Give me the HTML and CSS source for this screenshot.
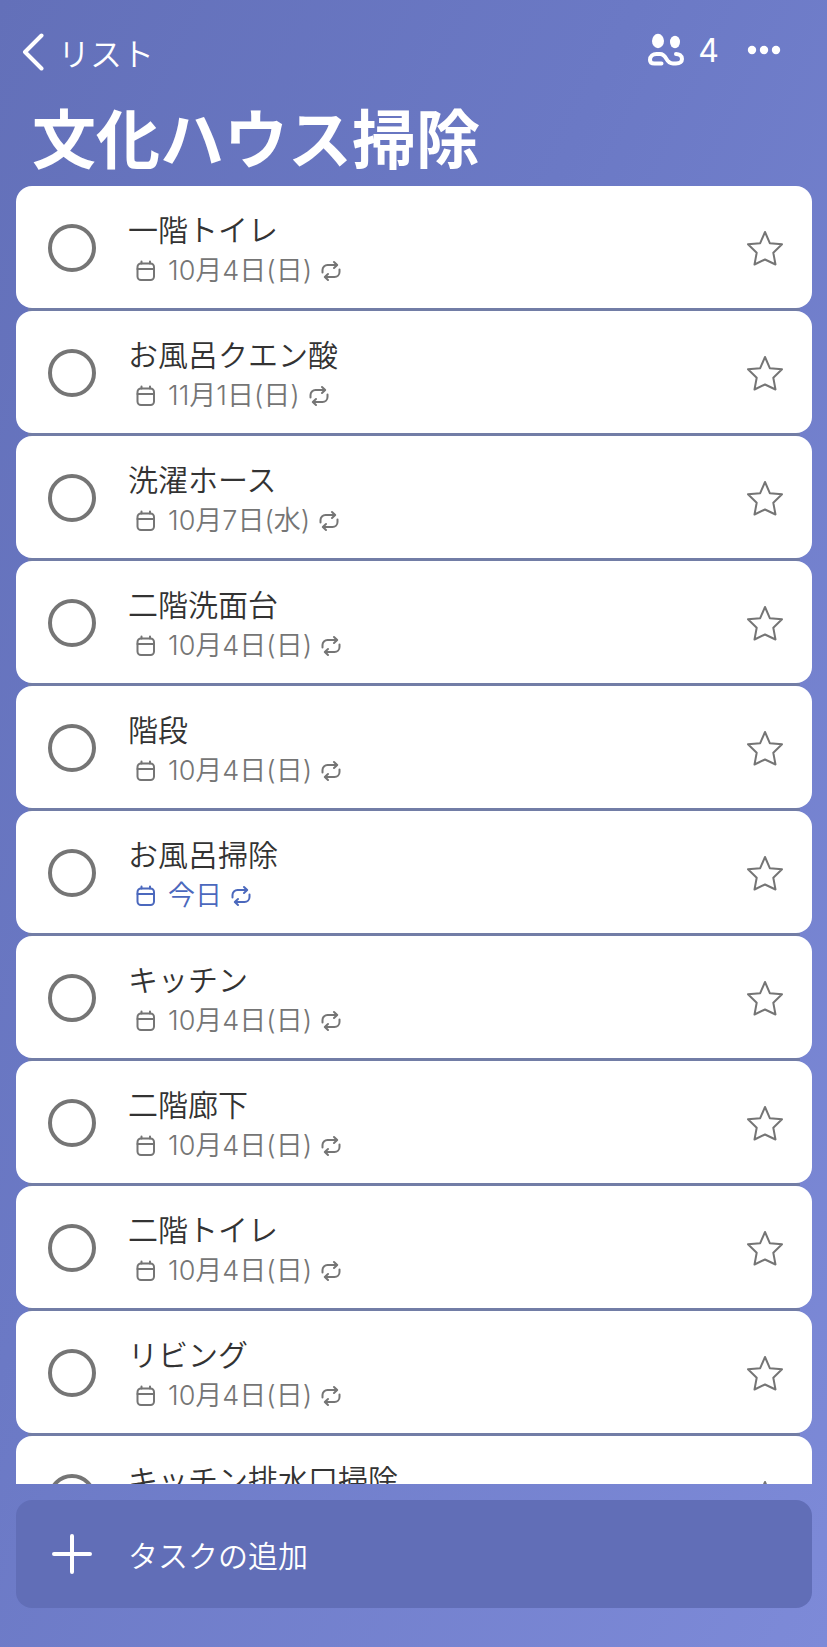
FILE: index.html
```html
<!DOCTYPE html>
<html lang="ja">
<head>
  <meta charset="UTF-8">
  <meta name="viewport" content="width=device-width, initial-scale=1">
  <title>文化ハウス掃除</title>
  <link rel="stylesheet" href="styles.css">
</head>
<body>

  <!-- shared icons -->
  <svg class="icon-defs" aria-hidden="true">
    <symbol id="icon-calendar" viewBox="0 0 20 22">
      <rect x="1.5" y="3.500" width="16.500" height="16.500" rx="3.500"/>
      <path d="M1.5 9h16.500M5.500 1.500v2M14 1.500v2"/>
    </symbol>
    <symbol id="icon-repeat" viewBox="0 0 20 22">
      <path d="M1.500 12.500V10a5 5 0 0 1 5-5H16M13 2l3.200 3L13 8"/>
      <path d="M18.500 9.500V12a5 5 0 0 1-5 5H4M7 14l-3.200 3L7 20"/>
    </symbol>
    <symbol id="icon-star" viewBox="0 0 38 38">
      <path d="M19 3l4.800 11.200L36 15.300l-8.700 8.400L29.500 35.500 19 30.500 8.500 35.500l2.200-11.800L2 15.300l12.200-1.100z"/>
    </symbol>
  </svg>

  <header class="top-bar">
    <button type="button" class="back-btn">
      <svg class="back-icon" viewBox="0 0 22 38"><path d="M19.500 2.500L3 19l16.500 16.500"/></svg>
      リスト
    </button>
    <div class="top-actions">
      <button type="button" class="members-btn" aria-label="メンバー 4">
        <svg class="members-icon" viewBox="0 0 36 34">
          <ellipse cx="10" cy="8" rx="6" ry="7.200"/>
          <ellipse cx="27" cy="9" rx="5" ry="6.200"/>
          <path d="M13.500 30.500H6.500C2.500 30.500 2 28.500 2 27C2 23 5 21 8.500 21H12C19.500 21 17 30.500 25 30.500H28C32 30.500 34 28.500 34 26C34 22.500 31 21 28 21"/>
        </svg>
        4
      </button>
      <button type="button" class="more-btn" aria-label="その他">
        <svg class="more-icon" viewBox="0 0 34 10">
          <circle cx="5" cy="5" r="4.200"/>
          <circle cx="17" cy="5" r="4.200"/>
          <circle cx="29" cy="5" r="4.200"/>
        </svg>
      </button>
    </div>
  </header>

  <h1>文化ハウス掃除</h1>

  <ul class="task-list">
    <li class="task">
      <input type="checkbox" id="task1">
      <div class="task-text">
        <label for="task1">一階トイレ</label>
        <p class="due"><svg><use href="#icon-calendar"/></svg><span>10月4日(日)</span><svg><use href="#icon-repeat"/></svg></p>
      </div>
      <button type="button" class="star-btn" aria-label="重要"><svg><use href="#icon-star"/></svg></button>
    </li>
    <li class="task">
      <input type="checkbox" id="task2">
      <div class="task-text">
        <label for="task2">お風呂クエン酸</label>
        <p class="due"><svg><use href="#icon-calendar"/></svg><span>11月1日(日)</span><svg><use href="#icon-repeat"/></svg></p>
      </div>
      <button type="button" class="star-btn" aria-label="重要"><svg><use href="#icon-star"/></svg></button>
    </li>
    <li class="task">
      <input type="checkbox" id="task3">
      <div class="task-text">
        <label for="task3">洗濯ホース</label>
        <p class="due"><svg><use href="#icon-calendar"/></svg><span>10月7日(水)</span><svg><use href="#icon-repeat"/></svg></p>
      </div>
      <button type="button" class="star-btn" aria-label="重要"><svg><use href="#icon-star"/></svg></button>
    </li>
    <li class="task">
      <input type="checkbox" id="task4">
      <div class="task-text">
        <label for="task4">二階洗面台</label>
        <p class="due"><svg><use href="#icon-calendar"/></svg><span>10月4日(日)</span><svg><use href="#icon-repeat"/></svg></p>
      </div>
      <button type="button" class="star-btn" aria-label="重要"><svg><use href="#icon-star"/></svg></button>
    </li>
    <li class="task">
      <input type="checkbox" id="task5">
      <div class="task-text">
        <label for="task5">階段</label>
        <p class="due"><svg><use href="#icon-calendar"/></svg><span>10月4日(日)</span><svg><use href="#icon-repeat"/></svg></p>
      </div>
      <button type="button" class="star-btn" aria-label="重要"><svg><use href="#icon-star"/></svg></button>
    </li>
    <li class="task">
      <input type="checkbox" id="task6">
      <div class="task-text">
        <label for="task6">お風呂掃除</label>
        <p class="due today"><svg><use href="#icon-calendar"/></svg><span>今日</span><svg><use href="#icon-repeat"/></svg></p>
      </div>
      <button type="button" class="star-btn" aria-label="重要"><svg><use href="#icon-star"/></svg></button>
    </li>
    <li class="task">
      <input type="checkbox" id="task7">
      <div class="task-text">
        <label for="task7">キッチン</label>
        <p class="due"><svg><use href="#icon-calendar"/></svg><span>10月4日(日)</span><svg><use href="#icon-repeat"/></svg></p>
      </div>
      <button type="button" class="star-btn" aria-label="重要"><svg><use href="#icon-star"/></svg></button>
    </li>
    <li class="task">
      <input type="checkbox" id="task8">
      <div class="task-text">
        <label for="task8">二階廊下</label>
        <p class="due"><svg><use href="#icon-calendar"/></svg><span>10月4日(日)</span><svg><use href="#icon-repeat"/></svg></p>
      </div>
      <button type="button" class="star-btn" aria-label="重要"><svg><use href="#icon-star"/></svg></button>
    </li>
    <li class="task">
      <input type="checkbox" id="task9">
      <div class="task-text">
        <label for="task9">二階トイレ</label>
        <p class="due"><svg><use href="#icon-calendar"/></svg><span>10月4日(日)</span><svg><use href="#icon-repeat"/></svg></p>
      </div>
      <button type="button" class="star-btn" aria-label="重要"><svg><use href="#icon-star"/></svg></button>
    </li>
    <li class="task">
      <input type="checkbox" id="task10">
      <div class="task-text">
        <label for="task10">リビング</label>
        <p class="due"><svg><use href="#icon-calendar"/></svg><span>10月4日(日)</span><svg><use href="#icon-repeat"/></svg></p>
      </div>
      <button type="button" class="star-btn" aria-label="重要"><svg><use href="#icon-star"/></svg></button>
    </li>
    <li class="task">
      <input type="checkbox" id="task11">
      <div class="task-text">
        <label for="task11">キッチン排水口掃除</label>
        <p class="due"><svg><use href="#icon-calendar"/></svg><span>10月4日(日)</span><svg><use href="#icon-repeat"/></svg></p>
      </div>
      <button type="button" class="star-btn" aria-label="重要"><svg><use href="#icon-star"/></svg></button>
    </li>
  </ul>

  <button type="button" class="add-btn">
    <svg class="plus-icon" viewBox="0 0 40 40"><path d="M20 2v36M2 20h36"/></svg>
    タスクの追加
  </button>

</body>
</html>
```

FILE: styles.css
```css
* {
  box-sizing: border-box;
}

body {
  margin: 0;
  height: 100vh;
  padding: 24px 15px 39px 16px;
  display: flex;
  flex-direction: column;
  font-family: Inter, "Noto Sans CJK JP", sans-serif;
  font-size: 30px;
  font-weight: 350;
  color: #333;
  background: linear-gradient(115deg, #6370b9 0%, #6b79c5 40%, #7d8ad8 100%);
}

button {
  border: none;
  padding: 0;
  background: none;
  font: inherit;
  color: white;
  cursor: pointer;
}

svg {
  display: block;
  fill: none;
  stroke: currentColor;
  stroke-linecap: round;
  stroke-linejoin: round;
}

.icon-defs {
  position: absolute;
  width: 0;
  height: 0;
}

/* header */
.top-bar {
  display: flex;
  justify-content: space-between;
  align-items: center;
  height: 56px;
  padding: 0 31px 0 6px;
}

.back-btn {
  display: flex;
  align-items: center;
  gap: 14px;
  font-size: 32px;
}

.back-icon {
  width: 22px;
  height: 38px;
  stroke-width: 4;
}

.top-actions {
  display: flex;
  align-items: center;
  gap: 28px;
  padding-bottom: 4px;
}

.members-btn {
  display: flex;
  align-items: center;
  gap: 14px;
  font-size: 32px;
  font-weight: 400;
}

.members-icon {
  width: 36px;
  height: 34px;
  stroke-width: 4;
  overflow: visible;
}

.members-icon ellipse,
.more-icon {
  fill: currentColor;
  stroke: none;
}

.more-icon {
  width: 34px;
  height: 10px;
}

h1 {
  margin: 18px 0 4px;
  padding: 0 16px;
  font-size: 64px;
  font-weight: 700;
  line-height: 84px;
  color: white;
}

/* tasks */
.task-list {
  flex: 1;
  min-height: 0;
  margin: 0;
  padding: 0;
  list-style: none;
  overflow: hidden;
}

.task {
  position: relative;
  display: flex;
  align-items: center;
  height: 122px;
  margin-bottom: 3px;
  padding: 2px 28px 0 32px;
  border-radius: 16px;
  background: white;
}

/* thin line between two cards */
.task::after {
  content: "";
  position: absolute;
  left: 12px;
  right: 12px;
  bottom: -3px;
  height: 3px;
  background: #727da6;
}

.task input {
  appearance: none;
  flex: none;
  width: 48px;
  height: 48px;
  margin: 0;
  border: 4px solid #757575;
  border-radius: 50%;
}

.task-text {
  flex: 1;
  padding: 3px 0 0 32px;
}

.task-text label {
  display: block;
  line-height: 42px;
}

.due {
  display: flex;
  align-items: center;
  gap: 12px;
  margin: 0;
  padding-left: 8px;
  font-size: 27px;
  line-height: 40px;
  color: #757575;
}

.due svg {
  width: 20px;
  height: 22px;
  stroke-width: 2;
}

.due svg:last-child {
  margin-left: -3px;
}

.today {
  color: #4b68bd;
}

.star-btn {
  color: #757575;
}

.star-btn svg {
  width: 38px;
  height: 38px;
  stroke-width: 2;
}

/* add task */
.add-btn {
  display: flex;
  align-items: center;
  gap: 36px;
  height: 108px;
  margin-top: 16px;
  padding: 0 36px;
  border-radius: 16px;
  background: #616eb7;
}

.plus-icon {
  width: 40px;
  height: 40px;
  stroke-width: 4;
}
```
